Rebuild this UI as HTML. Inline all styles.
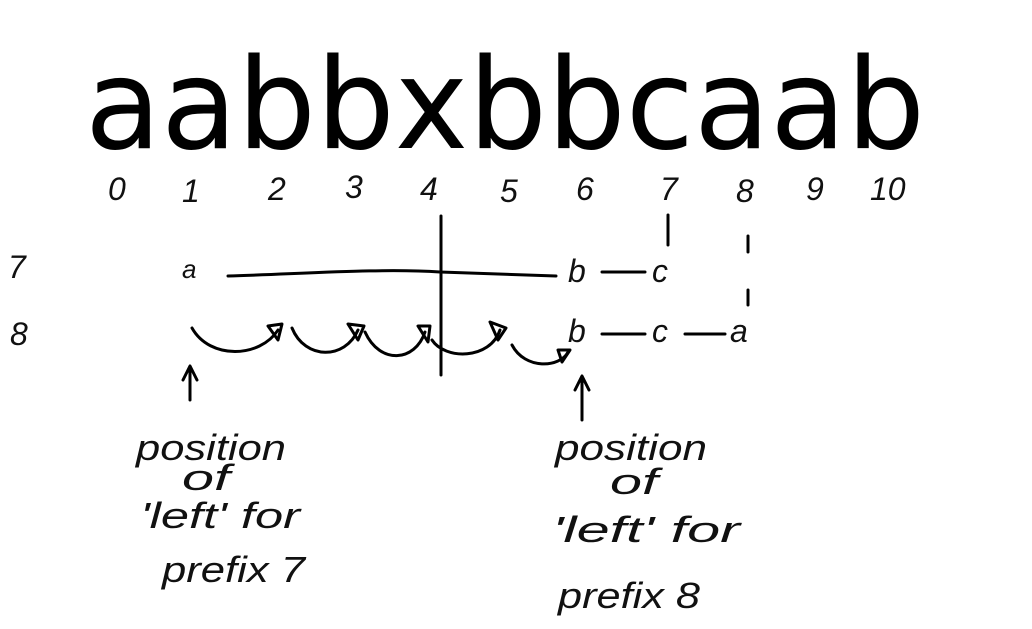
<!DOCTYPE html>
<html><head><meta charset="utf-8"><style>
html,body{margin:0;padding:0;background:#fff;width:1032px;height:629px;overflow:hidden}
svg{display:block}
.h{font-family:"Liberation Sans",sans-serif;fill:#111;font-style:italic}
</style></head><body>
<svg width="1032" height="629" viewBox="0 0 1032 629" xmlns="http://www.w3.org/2000/svg">
<text x="85" y="148" font-family="DejaVu Sans, sans-serif" font-size="126" fill="#000" textLength="840" lengthAdjust="spacingAndGlyphs">aabbxbbcaab</text>
<g class="h" font-size="32">
<text x="108" y="200">0</text><text x="182" y="202">1</text><text x="268" y="200">2</text><text x="345" y="198">3</text><text x="420" y="200">4</text><text x="500" y="202">5</text><text x="576" y="200">6</text><text x="660" y="200">7</text><text x="736" y="202">8</text><text x="806" y="200">9</text><text x="870" y="200">10</text>
<text x="8" y="278">7</text><text x="10" y="345">8</text>
<text x="182" y="278" font-size="26">a</text>
<text x="568" y="282">b</text><text x="652" y="282">c</text>
<text x="568" y="342">b</text><text x="652" y="342">c</text><text x="730" y="342">a</text>
</g>
<g fill="none" stroke="#000" stroke-width="3" stroke-linecap="round" stroke-linejoin="round">
<path d="M228 276 C300 274 380 268 440 272 L556 276"/>
<path d="M441 216 L441 375"/>
<path d="M602 272 L645 272"/><path d="M602 334 L645 334"/><path d="M685 334 L725 334"/>
<path d="M668 215 L668 245"/><path d="M748 236 L748 252"/><path d="M748 290 L748 305"/>
<path d="M192 328 C210 360 260 358 278 330"/><path d="M268 326 L282 324 L278 340 Z"/>
<path d="M292 328 C305 360 345 360 358 330"/><path d="M348 324 L364 326 L358 340 Z"/>
<path d="M365 332 C380 365 415 362 425 332"/><path d="M418 326 L430 326 L428 342 Z"/>
<path d="M432 340 C445 360 490 360 500 330"/><path d="M490 322 L506 328 L498 340 Z"/>
<path d="M512 345 C525 370 560 368 568 352"/><path d="M558 350 L570 350 L562 362 Z"/>
<path d="M190 400 L190 368 M183 380 L190 366 L197 380"/>
<path d="M582 420 L582 380 M575 390 L582 376 L589 390"/>
</g>
<g class="h" font-size="36">
<text x="136" y="460" textLength="150" lengthAdjust="spacingAndGlyphs">position</text>
<text x="182" y="490" textLength="48" lengthAdjust="spacingAndGlyphs">of</text>
<text x="140" y="528" textLength="160" lengthAdjust="spacingAndGlyphs">'left' for</text>
<text x="162" y="582" textLength="143" lengthAdjust="spacingAndGlyphs">prefix 7</text>
<text x="555" y="460" textLength="152" lengthAdjust="spacingAndGlyphs">position</text>
<text x="610" y="494" textLength="48" lengthAdjust="spacingAndGlyphs">of</text>
<text x="552" y="542" textLength="188" lengthAdjust="spacingAndGlyphs">'left' for</text>
<text x="558" y="608" textLength="142" lengthAdjust="spacingAndGlyphs">prefix 8</text>
</g>
</svg>
</body></html>
